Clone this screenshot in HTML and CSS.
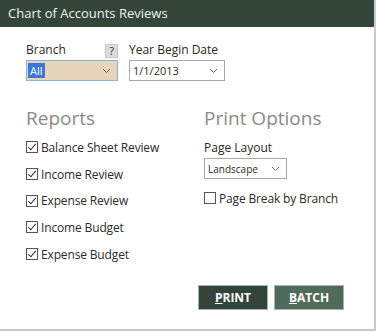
FILE: index.html
```html
<!DOCTYPE html>
<html lang="en">

<head>
    <meta charset="UTF-8">
    <title>Chart of Accounts Reviews</title>
    <link rel="stylesheet" href="styles.css">
</head>

<body>
    <div class="window">
        <div class="titlebar">Chart of Accounts Reviews</div>

        <div class="content">
            <div class="top-row">
                <div class="field field-branch">
                    <div class="label-row">
                        <span class="label">Branch</span>
                        <span class="help">?</span>
                    </div>
                    <div class="select select-branch">
                        <span class="selected">All</span>
                        <svg class="chevron" width="9" height="6" viewBox="0 0 9 6"><path d="M1 1 L4.5 4.5 L8 1" fill="none" stroke="#666" stroke-width="1"/></svg>
                    </div>
                </div>
                <div class="field field-year">
                    <div class="label-row">
                        <span class="label">Year Begin Date</span>
                    </div>
                    <div class="select select-year">
                        <span>1/1/2013</span>
                        <svg class="chevron" width="9" height="6" viewBox="0 0 9 6"><path d="M1 1 L4.5 4.5 L8 1" fill="none" stroke="#666" stroke-width="1"/></svg>
                    </div>
                </div>
            </div>

            <div class="sections">
                <div class="section section-reports">
                    <h2>Reports</h2>
                    <div class="check-list">
                        <label class="check"><span class="box checked"></span>Balance Sheet Review</label>
                        <label class="check"><span class="box checked"></span>Income Review</label>
                        <label class="check"><span class="box checked"></span>Expense Review</label>
                        <label class="check"><span class="box checked"></span>Income Budget</label>
                        <label class="check"><span class="box checked"></span>Expense Budget</label>
                    </div>
                </div>
                <div class="section section-print">
                    <h2>Print Options</h2>
                    <div class="label">Page Layout</div>
                    <div class="select select-layout">
                        <span>Landscape</span>
                        <svg class="chevron" width="9" height="6" viewBox="0 0 9 6"><path d="M1 1 L4.5 4.5 L8 1" fill="none" stroke="#666" stroke-width="1"/></svg>
                    </div>
                    <label class="check check-break"><span class="box"></span>Page Break by Branch</label>
                </div>
            </div>

            <div class="buttons">
                <button class="btn btn-print"><u>P</u>RINT</button>
                <button class="btn btn-batch"><u>B</u>ATCH</button>
            </div>
        </div>
    </div>
</body>

</html>
```

FILE: styles.css
```css
body {
    margin: 0;
    font-family: "Open Sans", Arial, sans-serif;
    font-size: 12px;
    color: #2b2b2b;
    background: #fff;
}

.window {
    width: 374px;
    height: 329px;
    border-right: 2px solid #c3ccd3;
    border-bottom: 2px solid #c3ccd3;
    display: flex;
    flex-direction: column;
}

.titlebar {
    height: 27px;
    line-height: 27px;
    padding-left: 8px;
    background-color: #34453a;
    color: #eef1ee;
    font-size: 13px;
}

.content {
    padding: 14px 0 0 26px;
    flex: 1;
}

.top-row {
    display: flex;
    gap: 11px;
}

.label-row {
    display: flex;
    justify-content: space-between;
    align-items: flex-end;
    height: 17px;
    margin-bottom: 2px;
}

.label {
    font-size: 12px;
    color: #2e2622;
}

.help {
    width: 11px;
    height: 12px;
    line-height: 12px;
    text-align: center;
    font-size: 11px;
    background-color: #dcdcdc;
    border: 1px solid #c8c8c8;
    color: #333;
}

.field-branch {
    width: 92px;
}

.select {
    display: flex;
    align-items: center;
    justify-content: space-between;
    height: 19px;
    padding: 0 6px 0 3px;
    border: 1px solid #a8a8a8;
    background: #fff;
    font-size: 11px;
    box-sizing: border-box;
}

.select-branch {
    height: 21px;
    padding-left: 1px;
    background-color: #e6d4bb;
    border-color: #8bb0dc;
}

.selected {
    background-color: #3b78d8;
    color: #fff;
    padding: 0 2px;
    line-height: 15px;
}

.select-year {
    width: 96px;
    height: 21px;
}

.sections {
    display: flex;
    margin-top: 25px;
}

.section-reports {
    width: 178px;
}

h2 {
    margin: 0 0 13px;
    font-size: 19px;
    font-weight: normal;
    color: #8a8a8a;
    line-height: 24px;
}

.check {
    display: flex;
    align-items: center;
    height: 26.7px;
    font-size: 12px;
    letter-spacing: -0.15px;
}

.check-list {
    margin-top: -9px;
}

.box {
    width: 10px;
    height: 10px;
    border: 1px solid #555;
    margin-right: 3px;
    position: relative;
    background: #fff;
}

.box.checked::after {
    content: "";
    position: absolute;
    left: 3px;
    top: 0px;
    width: 3px;
    height: 7px;
    border-right: 1px solid #333;
    border-bottom: 1px solid #333;
    transform: rotate(40deg);
}

.section-print .label {
    margin-top: -4px;
    margin-bottom: 2px;
}

.select-layout {
    width: 83px;
    height: 21px;
    font-size: 10px;
}

.check-break {
    margin-top: 6px;
}

.buttons {
    display: flex;
    gap: 6px;
    margin: 18px 0 0 172px;
}

.btn {
    width: 70px;
    height: 25px;
    border: 1px solid #a9b3ad;
    color: #fff;
    font-family: "Open Sans", Arial, sans-serif;
    font-size: 12px;
    font-weight: bold;
    cursor: pointer;
}

.btn-print {
    background-color: #33443a;
}

.btn-batch {
    background-color: #4f6b5a;
}
```
